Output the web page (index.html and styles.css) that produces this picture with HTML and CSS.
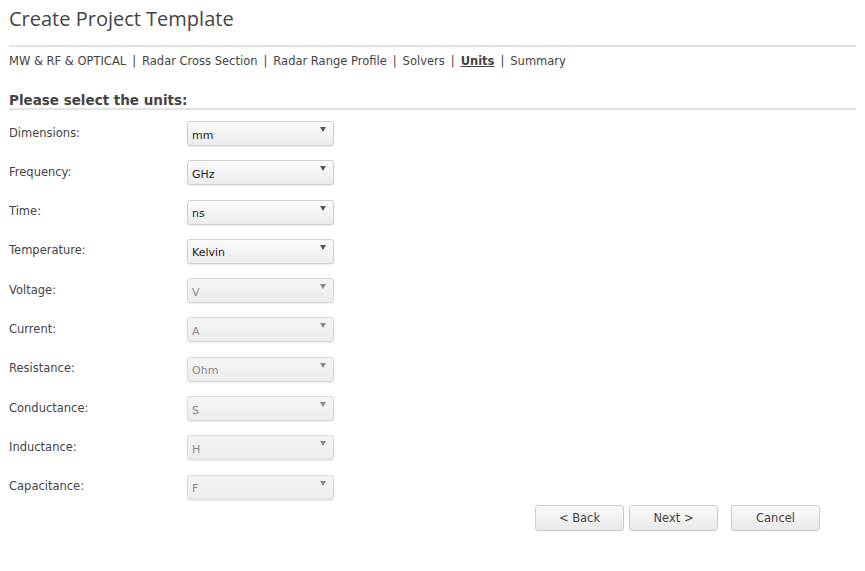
FILE: index.html
```html
<!DOCTYPE html>
<html>
<head>
<meta charset="utf-8">
<link rel="stylesheet" href="styles.css">
</head>
<body>
<div class="page">
  <h1 class="title">Create Project Template</h1>
  <nav class="steps">
    <span>MW &amp; RF &amp; OPTICAL</span><span class="sep">|</span><span>Radar Cross Section</span><span class="sep">|</span><span>Radar Range Profile</span><span class="sep">|</span><span>Solvers</span><span class="sep">|</span><span class="current">Units</span><span class="sep">|</span><span>Summary</span>
  </nav>
  <h2 class="section">Please select the units:</h2>
  <div class="form">
    <div class="row"><label>Dimensions:</label><div class="select"><span>mm</span><i class="arrow"></i></div></div>
    <div class="row"><label>Frequency:</label><div class="select"><span>GHz</span><i class="arrow"></i></div></div>
    <div class="row"><label>Time:</label><div class="select"><span>ns</span><i class="arrow"></i></div></div>
    <div class="row"><label>Temperature:</label><div class="select"><span>Kelvin</span><i class="arrow"></i></div></div>
    <div class="row"><label>Voltage:</label><div class="select disabled"><span>V</span><i class="arrow"></i></div></div>
    <div class="row"><label>Current:</label><div class="select disabled"><span>A</span><i class="arrow"></i></div></div>
    <div class="row"><label>Resistance:</label><div class="select disabled"><span>Ohm</span><i class="arrow"></i></div></div>
    <div class="row"><label>Conductance:</label><div class="select disabled"><span>S</span><i class="arrow"></i></div></div>
    <div class="row"><label>Inductance:</label><div class="select disabled"><span>H</span><i class="arrow"></i></div></div>
    <div class="row"><label>Capacitance:</label><div class="select disabled"><span>F</span><i class="arrow"></i></div></div>
  </div>
  <div class="buttons">
    <button class="btn">&lt; Back</button>
    <button class="btn">Next &gt;</button>
    <button class="btn cancel">Cancel</button>
  </div>
</div>
</body>
</html>
```
FILE: styles.css
```css
html, body {
  margin: 0;
  padding: 0;
  background: #ffffff;
  width: 865px;
  height: 571px;
  overflow: hidden;
}
.page {
  padding: 0 9px;
  font-family: "DejaVu Sans", Verdana, sans-serif;
  color: #444444;
}
.title {
  margin: 0;
  padding-top: 6px;
  height: 39px;
  box-sizing: content-box;
  font-family: "Open Sans", sans-serif;
  font-weight: 400;
  font-size: 20px;
  line-height: 26px;
  color: #444444;
  border-bottom: 2px solid #e3e3e3;
}
.steps {
  display: flex;
  font-size: 11.5px;
  line-height: 14px;
  padding-top: 7px;
  height: 31px;
  color: #444444;
}
.steps .sep {
  margin: 0 6px;
}
.steps .current {
  font-weight: bold;
  text-decoration: underline;
}
.section {
  margin: 0;
  font-size: 13.5px;
  font-weight: bold;
  line-height: 15px;
  height: 25px;
  padding-top: 8px;
  color: #444444;
  border-bottom: 2px solid #e3e3e3;
  box-sizing: border-box;
}
.form {
  display: flex;
  flex-direction: column;
  gap: 14.3px;
  padding-top: 11px;
}
.row {
  display: flex;
  align-items: center;
  height: 25px;
}
.row label {
  width: 178px;
  font-size: 11.5px;
  color: #444444;
  margin-top: -2px;
}
.select {
  position: relative;
  width: 141px;
  height: 23px;
  border: 1px solid #cfcfcf;
  border-radius: 3px;
  background: linear-gradient(#fbfbfb, #ececec);
  box-shadow: 0 1px 1px rgba(0,0,0,0.08);
  display: flex;
  align-items: center;
  padding-left: 4px;
  box-sizing: content-box;
  font-size: 11px;
  color: #222222;
}
.select span {
  padding-top: 3px;
}
.select.disabled {
  background: linear-gradient(#f5f5f5, #ededed);
  color: #8a8a8a;
  border-color: #d8d8d8;
}
.arrow {
  position: absolute;
  right: 7px;
  top: 5px;
  width: 0;
  height: 0;
  border-left: 3.5px solid transparent;
  border-right: 3.5px solid transparent;
  border-top: 5px solid #555555;
}
.select.disabled .arrow {
  border-top-color: #8a8a8a;
}
.buttons {
  display: flex;
  justify-content: flex-end;
  padding-right: 36px;
  margin-top: 5px;
}
.btn {
  width: 89px;
  height: 26px;
  margin-left: 5px;
  border: 1px solid #cccccc;
  border-radius: 3px;
  background: linear-gradient(#fafafa, #e9e9e9);
  font-family: "DejaVu Sans", Verdana, sans-serif;
  font-size: 11.5px;
  color: #444444;
  padding: 0;
}
.btn.cancel {
  margin-left: 13px;
}
```
